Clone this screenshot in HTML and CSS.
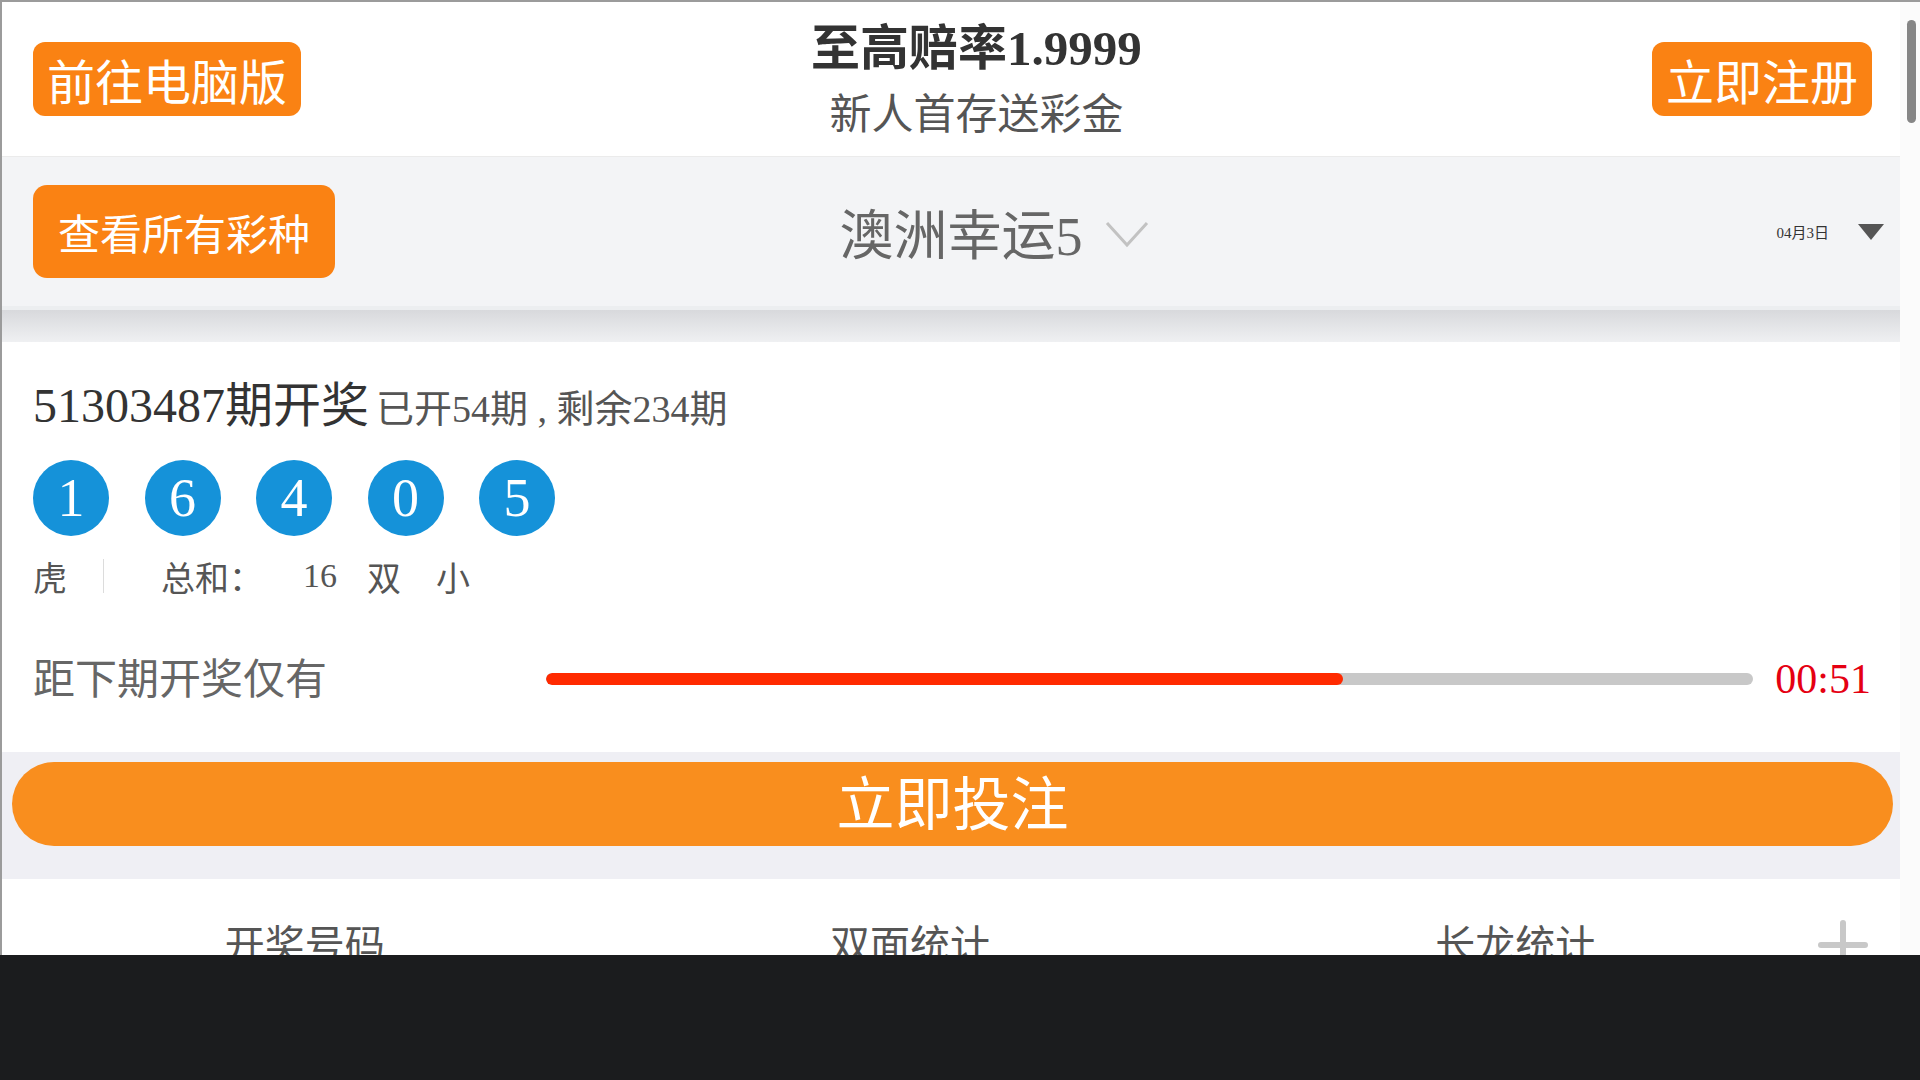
FILE: index.html
```html
<!DOCTYPE html>
<html>
<head>
    <meta charset="utf-8">
    <title>澳洲幸运5 | 开奖</title>
    <link rel="stylesheet" href="styles.css">
</head>
<body>
    <div class="screen">
        <div class="page">
            <header class="top">
                <a class="btn-orange btn-top">前往电脑版</a>
                <div class="promo">
                    <div class="promo-title">至高赔率1.9999</div>
                    <div class="promo-sub">新人首存送彩金</div>
                </div>
                <a class="btn-orange btn-top">立即注册</a>
            </header>

            <div class="lottery-bar">
                <a class="btn-orange btn-all">查看所有彩种</a>
                <div class="lottery-name">
                    <span>澳洲幸运5</span>
                    <svg class="chevron" width="46" height="28" viewBox="0 0 46 28">
                        <polyline points="3,3 23,25 43,3" fill="none" stroke="#c2c2c2" stroke-width="3"/>
                    </svg>
                </div>
                <div class="date-pick">
                    <span>04月3日</span>
                    <span class="tri"></span>
                </div>
            </div>
            <div class="shade"></div>

            <section class="draw">
                <div class="draw-title">
                    <span class="issue">51303487期开奖</span>
                    <span class="issue-info">已开54期 , 剩余234期</span>
                </div>
                <div class="balls">
                    <span class="ball">1</span>
                    <span class="ball">6</span>
                    <span class="ball">4</span>
                    <span class="ball">0</span>
                    <span class="ball">5</span>
                </div>
                <div class="summary">
                    <span>虎</span>
                    <span class="sep"></span>
                    <span class="sum-label">总和：</span>
                    <span class="sum-num">16</span>
                    <span class="sum-odd">双</span>
                    <span class="sum-size">小</span>
                </div>
                <div class="countdown">
                    <span class="cd-label">距下期开奖仅有</span>
                    <div class="progress">
                        <div class="progress-fill" style="width: 66%"></div>
                    </div>
                    <span class="cd-time">00:51</span>
                </div>
            </section>

            <div class="bet-wrap">
                <a class="btn-bet">立即投注</a>
            </div>

            <nav class="tabs">
                <span class="tab">开奖号码</span>
                <span class="tab">双面统计</span>
                <span class="tab">长龙统计</span>
                <span class="tab-more">
                    <svg width="50" height="50" viewBox="0 0 50 50">
                        <line x1="25" y1="3" x2="25" y2="50" stroke="#c8c8c8" stroke-width="6" stroke-linecap="round"/>
                        <line x1="3" y1="25" x2="47" y2="25" stroke="#c8c8c8" stroke-width="6" stroke-linecap="round"/>
                    </svg>
                </span>
            </nav>
        </div>
        <div class="scrollbar">
            <div class="thumb"></div>
        </div>
    </div>
</body>
</html>
```

FILE: styles.css
```css
body {
    margin: 0;
    background: #1b1c1e;
    font-family: "Liberation Serif", "Noto Sans CJK SC", serif;
}
.screen {
    display: flex;
    height: 955px;
    background: #fff;
    border-top: 2px solid #9b9b9b;
    border-left: 2px solid #9b9b9b;
    box-sizing: border-box;
    overflow: hidden;
}
.page {
    flex: 1;
    min-width: 0;
    display: flex;
    flex-direction: column;
}
.page > * {
    flex-shrink: 0;
}
.scrollbar {
    width: 20px;
    background: #fbfbfb;
    display: flex;
    justify-content: center;
}
.thumb {
    width: 9px;
    height: 103px;
    margin-top: 18px;
    margin-left: 2px;
    border-radius: 5px;
    background: #868686;
}

/* header */
.top {
    height: 154px;
    display: flex;
    align-items: center;
    padding: 0 28px 0 31px;
    border-bottom: 1px solid #ebebeb;
}
.btn-orange {
    display: flex;
    align-items: center;
    background: #fa8213;
    color: #fff;
    font-family: "Noto Sans CJK SC", sans-serif;
    line-height: 1;
    border-radius: 12px;
}
.btn-top {
    height: 74px;
    padding: 0 14px;
    font-size: 48px;
}
.promo {
    flex: 1;
    text-align: center;
    margin-top: 4px;
}
.promo-title {
    font-size: 49px;
    font-weight: bold;
    color: #333;
    line-height: 56px;
}
.promo-sub {
    font-family: "Noto Sans CJK SC", sans-serif;
    font-size: 42px;
    color: #555;
    line-height: 60px;
    margin-top: 4px;
}

/* lottery select bar */
.lottery-bar {
    height: 149px;
    display: flex;
    align-items: center;
    padding-left: 31px;
    background: #f3f4f6;
}
.btn-all {
    height: 93px;
    padding: 0 25px;
    font-size: 42px;
    border-radius: 14px;
}
.lottery-name {
    flex: 1;
    display: flex;
    justify-content: center;
    align-items: center;
    font-size: 54px;
    color: #666;
}
.chevron {
    margin-left: 21px;
    margin-top: 4px;
}
.date-pick {
    width: 230px;
    padding-right: 16px;
    display: flex;
    justify-content: flex-end;
    align-items: center;
    gap: 29px;
    font-size: 15px;
    color: #333;
}
.tri {
    width: 0;
    height: 0;
    border-left: 13px solid transparent;
    border-right: 13px solid transparent;
    border-top: 16px solid #555;
}
.shade {
    height: 36px;
    box-sizing: border-box;
    border-top: 4px solid #eceef0;
    background: linear-gradient(#d8d9dc, #eff0f2);
}

/* current draw */
.draw {
    height: 410px;
    box-sizing: border-box;
    padding: 34px 29px 0 31px;
}
.draw-title {
    display: flex;
    align-items: baseline;
    line-height: 60px;
}
.issue {
    font-size: 48px;
    color: #333;
}
.issue-info {
    font-size: 38px;
    color: #555;
    margin-left: 7px;
}
.balls {
    display: flex;
    gap: 35.5px;
    margin-top: 21px;
}
.ball {
    width: 76px;
    height: 76px;
    border-radius: 50%;
    background: #1592d9;
    color: #fff;
    font-size: 54px;
    display: flex;
    align-items: center;
    justify-content: center;
}
.summary {
    display: flex;
    align-items: center;
    height: 40px;
    margin-top: 20px;
    font-size: 34px;
    color: #555;
}
.sep {
    width: 1px;
    height: 34px;
    background: #dcdcdc;
    margin-left: 36px;
}
.sum-label {
    margin-left: 57px;
}
.sum-num {
    margin-left: 40px;
}
.sum-odd {
    margin-left: 30px;
}
.sum-size {
    margin-left: 35px;
}
.countdown {
    display: flex;
    align-items: center;
    height: 60px;
    margin-top: 53px;
}
.cd-label {
    width: 513px;
    flex: none;
    font-size: 42px;
    color: #666;
    margin-top: -8px;
}
.progress {
    flex: 1;
    height: 12px;
    border-radius: 6px;
    background: #c8c8c8;
    overflow: hidden;
}
.progress-fill {
    height: 100%;
    border-radius: 6px;
    background: #ff2a00;
}
.cd-time {
    margin-left: 22px;
    font-size: 42px;
    color: #e50012;
}

/* bet button */
.bet-wrap {
    background: #efeff4;
    padding: 10px 7px 33px 10px;
}
.btn-bet {
    height: 84px;
    box-sizing: border-box;
    padding-bottom: 8px;
    border-radius: 42px;
    background: #f98e1e;
    color: #fff;
    font-family: "Noto Sans CJK SC", sans-serif;
    font-size: 58px;
    display: flex;
    align-items: center;
    justify-content: center;
}

/* tabs */
.tabs {
    display: flex;
    padding-top: 43px;
}
.tab {
    flex: 1;
    text-align: center;
    font-family: "Noto Sans CJK SC", sans-serif;
    font-size: 40px;
    line-height: 1;
    color: #555;
}
.tab-more {
    width: 82px;
    margin-top: -2px;
}
```
